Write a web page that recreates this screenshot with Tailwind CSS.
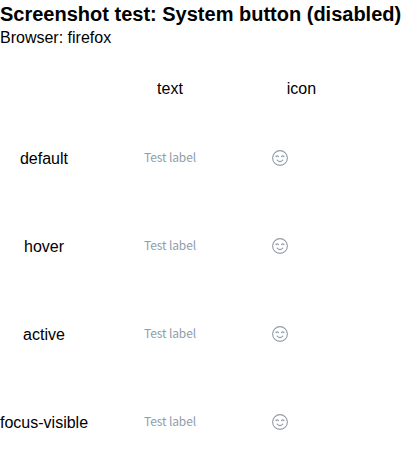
<!DOCTYPE html>
<html lang="en"><head><meta charset="utf-8"><title>System button</title>
<script src="https://cdn.jsdelivr.net/npm/@tailwindcss/browser@4"></script></head>
<body class="bg-white text-black font-['Liberation_Sans',sans-serif] text-base leading-[18px] overflow-hidden">
<svg class="hidden"><symbol id="smile" viewBox="0 0 16 16"><g fill="none" stroke="currentColor" stroke-linecap="round" stroke-width="1.1"><circle cx="8" cy="8" r="7.4"/><path d="M3.9 6.6Q5.2 5.2 6.5 6.6M9.5 6.6Q10.8 5.2 12.1 6.6M5.2 10.2Q8 12.9 10.8 10.2"/></g></symbol></svg>
<h1 class="text-xl font-bold leading-[23px] pt-[3px] whitespace-nowrap">Screenshot test: System button (disabled)</h1>
<p class="pt-[3px]">Browser: firefox</p>
<main class="pt-[18px] grid grid-cols-[88px_164px_99px] grid-rows-[48px_88px_88px_88px_88px] items-center text-center whitespace-nowrap">
<span></span><span>text</span><span>icon</span>
<span class="pt-1">default</span><span class="font-['Noto_Sans_CJK_SC',sans-serif] text-xs tracking-[-0.12px] text-[#919da8]">Test label</span><svg class="size-4 ml-5 mt-0.5 text-[#919da8]"><use href="#smile"/></svg>
<span class="pt-1">hover</span><span class="font-['Noto_Sans_CJK_SC',sans-serif] text-xs tracking-[-0.12px] text-[#919da8]">Test label</span><svg class="size-4 ml-5 mt-0.5 text-[#919da8]"><use href="#smile"/></svg>
<span class="pt-1">active</span><span class="font-['Noto_Sans_CJK_SC',sans-serif] text-xs tracking-[-0.12px] text-[#919da8]">Test label</span><svg class="size-4 ml-5 mt-0.5 text-[#919da8]"><use href="#smile"/></svg>
<span class="pt-1">focus-visible</span><span class="font-['Noto_Sans_CJK_SC',sans-serif] text-xs tracking-[-0.12px] text-[#919da8]">Test label</span><svg class="size-4 ml-5 mt-0.5 text-[#919da8]"><use href="#smile"/></svg>
</main></body></html>
